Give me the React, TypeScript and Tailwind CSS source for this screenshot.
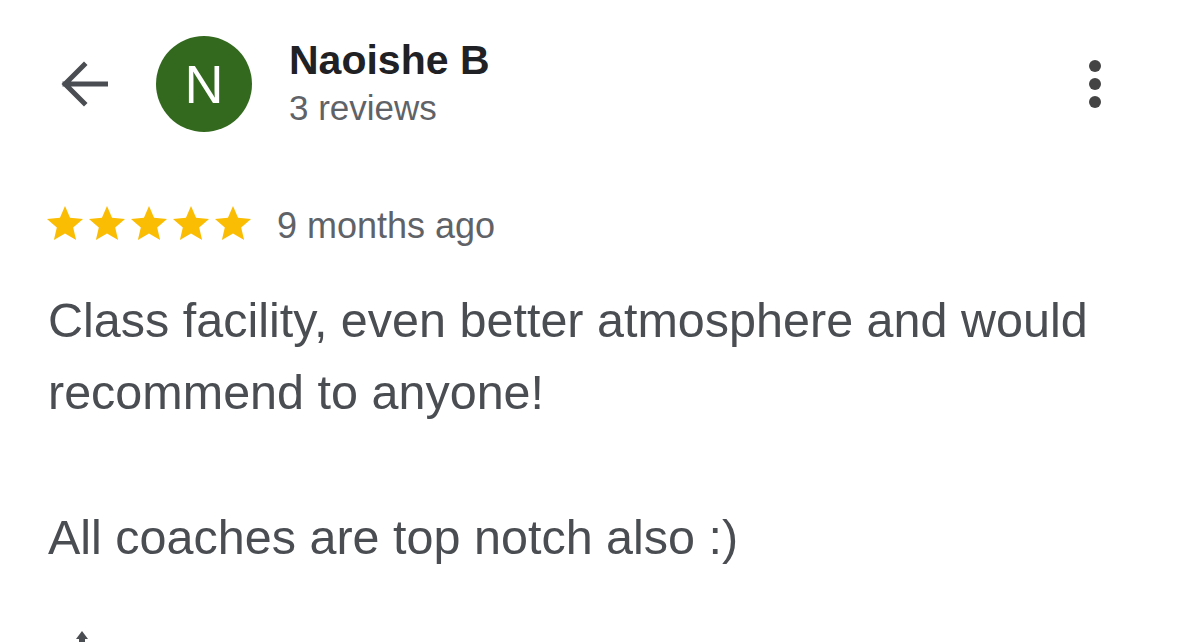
import React from "react";

const Star = () => (
  <svg viewBox="2 1.5 20 20" className="h-[36px] w-[36px]" fill="#fbbc04">
    <path d="M12 17.27L18.18 21l-1.64-7.03L22 9.24l-7.19-.61L12 2 9.19 8.63 2 9.24l5.46 4.73L5.82 21z" />
  </svg>
);

const App: React.FC = () => {
  return (
    <div
      className="w-[1179px] h-[642px] overflow-hidden bg-white"
      style={{ fontFamily: '"Liberation Sans", Arial, sans-serif' }}
    >
      {/* header */}
      <div className="flex items-start pt-[36px] pl-[60px] pr-[78px]">
        <div className="flex h-[96px] items-center">
          <svg width="48" height="48" viewBox="0 0 48 48" fill="none">
            <path
              d="M46 24H5M24 5L5 24l19 19"
              stroke="#4a4d52"
              strokeWidth="5"
              strokeLinecap="square"
            />
          </svg>
        </div>
        <div className="ml-[48px] flex h-[96px] w-[96px] items-center justify-center rounded-full bg-[#33691e]">
          <span className="text-[54px] leading-none text-white">N</span>
        </div>
        <div className="ml-[37px]">
          <div className="text-[41px] leading-[48px] font-bold text-[#202124]">
            Naoishe B
          </div>
          <div className="mt-[2px] text-[35px] leading-[44px] text-[#5f6368]">3 reviews</div>
        </div>
        <div className="ml-auto flex h-[96px] flex-col items-center justify-center gap-[6px]">
          <span className="h-[12px] w-[12px] rounded-full bg-[#444]" />
          <span className="h-[12px] w-[12px] rounded-full bg-[#444]" />
          <span className="h-[12px] w-[12px] rounded-full bg-[#444]" />
        </div>
      </div>

      {/* rating */}
      <div className="mt-[73px] flex h-[36px] items-center pl-[47px]">
        <div className="flex gap-[6px]">
          <Star />
          <Star />
          <Star />
          <Star />
          <Star />
        </div>
        <span className="ml-[26px] mt-[5px] text-[36px] leading-[40px] text-[#5f6368]">
          9 months ago
        </span>
      </div>

      {/* review body */}
      <div className="mt-[43px] px-[48px] text-[48.5px] leading-[72px] text-[#4a4d52]">
        <p>Class facility, even better atmosphere and would recommend to anyone!</p>
        <p className="mt-[73px]">All coaches are top notch also :)</p>
      </div>

      {/* actions, cut off */}
      <div className="mt-[58px] pl-[70px]">
        <svg width="30" height="30" viewBox="0 0 30 30" fill="#4a4d52">
          <path d="M12 0L18 8H15V30H9V8H6z" />
        </svg>
      </div>
    </div>
  );
};

export default App;
